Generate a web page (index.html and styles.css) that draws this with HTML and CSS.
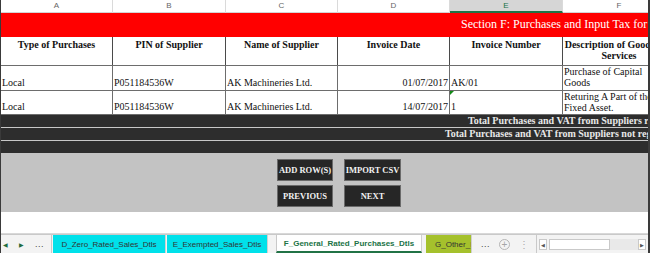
FILE: index.html
```html
<!DOCTYPE html>
<html lang="en">
<head>
    <meta charset="UTF-8">
    <title>Section F - Purchases</title>
    <link rel="stylesheet" href="styles.css">
</head>
<body>
    <div class="window">
        <div class="sheet">
            <div class="col-heads">
                <div class="col-head">A</div>
                <div class="col-head">B</div>
                <div class="col-head">C</div>
                <div class="col-head">D</div>
                <div class="col-head selected">E</div>
                <div class="col-head">F</div>
            </div>

            <div class="section-title">
                <span>Section F: Purchases and Input Tax for the period</span>
            </div>

            <div class="row head-row">
                <div class="cell">Type of Purchases</div>
                <div class="cell">PIN of Supplier</div>
                <div class="cell">Name of Supplier</div>
                <div class="cell">Invoice Date</div>
                <div class="cell">Invoice Number</div>
                <div class="cell">Description of Goods and Services</div>
            </div>

            <div class="row data-row">
                <div class="cell">Local</div>
                <div class="cell">P051184536W</div>
                <div class="cell">AK Machineries Ltd.</div>
                <div class="cell num">01/07/2017</div>
                <div class="cell">AK/01</div>
                <div class="cell wrap">Purchase of Capital Goods</div>
            </div>
            <div class="row data-row second">
                <div class="cell">Local</div>
                <div class="cell">P051184536W</div>
                <div class="cell">AK Machineries Ltd.</div>
                <div class="cell num">14/07/2017</div>
                <div class="cell flagged">1</div>
                <div class="cell wrap">Returing A Part of the Fixed Asset.</div>
            </div>

            <div class="total-row first"><span>Total Purchases and VAT from Suppliers registered</span></div>
            <div class="total-row second"><span>Total Purchases and VAT from Suppliers not registered</span></div>
            <div class="total-row empty"></div>

            <div class="actions">
                <div class="btn-grid">
                    <button class="sheet-btn">ADD ROW(S)</button>
                    <button class="sheet-btn">IMPORT CSV</button>
                    <button class="sheet-btn">PREVIOUS</button>
                    <button class="sheet-btn">NEXT</button>
                </div>
            </div>

            <div class="blank-row"></div>
        </div>

        <div class="tab-bar">
            <div class="tab-nav">
                <span class="arrow">&#9664;</span>
                <span class="arrow">&#9654;</span>
                <span class="dots">...</span>
            </div>
            <div class="tab cyan zero">D_Zero_Rated_Sales_Dtls</div>
            <div class="tab cyan exempt">E_Exempted_Sales_Dtls</div>
            <div class="tab active">F_General_Rated_Purchases_Dtls</div>
            <div class="tab olive"><span>G_Other_R</span></div>
            <span class="dots more">...</span>
            <span class="add-sheet">+</span>
            <span class="split">&#8942;</span>
            <div class="hscroll">
                <span class="sarrow">&#9664;</span>
                <span class="thumb"></span>
                <span class="track"></span>
                <span class="sarrow right">&#9654;</span>
            </div>
        </div>
    </div>
</body>
</html>
```

FILE: styles.css
```css
/* Base Reset */
* {
    margin: 0;
    padding: 0;
    box-sizing: border-box;
}

body {
    width: 650px;
    height: 253px;
    overflow: hidden;
    background: #fff;
    font-family: 'Liberation Serif', 'DejaVu Serif', serif;
}

/* Outer frame */
.window {
    width: 650px;
    height: 253px;
    border-left: 1px solid #3a3a3a;
    border-right: 2px solid #3a3a3a;
    overflow: hidden;
    display: flex;
    flex-direction: column;
}

.sheet {
    width: 675px;
    flex: 1;
}

/* Column letters */
.col-heads {
    display: grid;
    grid-template-columns: 112px 113px 112px 112px 113px 113px;
    height: 13px;
    background: #fff;
    border-bottom: 1px solid #d4d4d4;
}

.col-head {
    font-family: 'Liberation Sans', Arial, sans-serif;
    font-size: 8px;
    line-height: 12px;
    color: #666;
    text-align: center;
    border-right: 1px solid #dadada;
}

.col-head.selected {
    background: #d6d6d6;
    color: #217346;
    border-bottom: 2px solid #217346;
    line-height: 11px;
}

/* Red section band */
.section-title {
    height: 24px;
    background: #ff0000;
    color: #fff;
    font-family: 'Liberation Serif', serif;
    font-size: 12px;
    line-height: 23px;
    padding-left: 460px;
    white-space: nowrap;
    overflow: hidden;
}

/* Table rows */
.row {
    display: grid;
    grid-template-columns: 112px 113px 112px 112px 113px 113px;
}

.cell {
    border-right: 1px solid #6d6d6d;
    font-size: 10px;
    color: #111;
    white-space: nowrap;
    overflow: hidden;
}

.head-row {
    height: 29px;
    border-bottom: 1px solid #6d6d6d;
}

.head-row .cell {
    font-weight: bold;
    text-align: center;
    line-height: 11px;
    padding-top: 2px;
    border-right: 1px solid #4a4a4a;
}

.head-row .cell:last-child {
    white-space: normal;
    padding: 2px 0 0;
}

.data-row {
    height: 25px;
    border-bottom: 1px solid #6d6d6d;
}

.data-row.second {
    height: 24px;
}

.data-row .cell {
    display: flex;
    align-items: flex-end;
    padding: 0 1px 2px;
    line-height: 11px;
}

.data-row .cell.num {
    justify-content: flex-end;
}

.data-row .cell.wrap {
    white-space: normal;
    align-items: flex-start;
    padding: 0 20px 0 1px;
    line-height: 11px;
}

.cell.flagged {
    position: relative;
}

.cell.flagged::before {
    content: "";
    position: absolute;
    top: 0;
    left: 0;
    border-top: 4px solid #138a17;
    border-right: 4px solid transparent;
}

/* Dark total rows */
.total-row {
    height: 13px;
    background: #2d2d2d;
    border-bottom: 1px solid #c8c8c8;
    color: #e8e8e8;
    font-weight: bold;
    font-size: 10px;
    line-height: 12px;
    white-space: nowrap;
    overflow: hidden;
}

.total-row.first {
    padding-left: 467px;
}

.total-row.second {
    padding-left: 444px;
}

.total-row.empty {
    height: 12px;
    border-bottom: none;
}

/* Action buttons */
.actions {
    height: 59px;
    background: #c3c3c3;
    padding: 6px 0 0 276px;
}

.btn-grid {
    display: grid;
    grid-template-columns: 56px 57px;
    column-gap: 11px;
    row-gap: 4px;
}

.sheet-btn {
    height: 22px;
    background: #262626;
    border: 1px solid #6a6a6a;
    color: #f2f2f2;
    font-family: 'Liberation Serif', serif;
    font-weight: bold;
    font-size: 8.5px;
}

.blank-row {
    height: 22px;
    border-bottom: 1px solid #d8d8d8;
}

/* Sheet tabs */
.tab-bar {
    height: 19px;
    background: #f3f3f3;
    border-top: 1px solid #c9c9c9;
    display: flex;
    align-items: stretch;
    font-family: 'Liberation Sans', Arial, sans-serif;
    font-size: 8px;
    flex-shrink: 0;
}

.tab-nav {
    width: 51px;
    display: flex;
    align-items: center;
    gap: 11px;
    padding-left: 2px;
    color: #1f6b3d;
    font-size: 6px;
    border-right: 1px solid #c9c9c9;
}

.dots {
    color: #444;
    font-size: 9px;
    letter-spacing: 0.5px;
}

.tab {
    display: flex;
    align-items: center;
    justify-content: center;
    color: #333;
    white-space: nowrap;
    overflow: hidden;
    border-right: 1px solid #d0d0d0;
}

.tab.cyan {
    background: #00e1ea;
    margin-left: 1px;
}

.tab.zero {
    width: 113px;
}

.tab.exempt {
    width: 101px;
}

.tab.active {
    width: 146px;
    margin-left: 8px;
    background: #fff;
    color: #217346;
    font-weight: bold;
    border-bottom: 2px solid #217346;
    border-left: 1px solid #c9c9c9;
}

.tab.olive {
    width: 46px;
    margin-left: 4px;
    background: #a5c12c;
    justify-content: flex-start;
    padding-left: 9px;
}

.tab.olive span {
    display: block;
    width: 36px;
    overflow: hidden;
}

.dots.more {
    display: flex;
    align-items: center;
    margin-left: 9px;
}

.add-sheet {
    width: 11px;
    height: 11px;
    align-self: center;
    margin-left: 9px;
    border: 1px solid #b5b5b5;
    border-radius: 50%;
    color: #a5a5a5;
    font-size: 10px;
    line-height: 9px;
    text-align: center;
}

.split {
    align-self: center;
    margin-left: 9px;
    color: #aaa;
    font-size: 10px;
}

.hscroll {
    flex: 1;
    display: flex;
    align-items: center;
    margin-left: 7px;
    padding: 0 2px;
    border-left: 1px solid #c9c9c9;
}

.sarrow {
    font-size: 5px;
    color: #555;
    width: 8px;
    height: 11px;
    line-height: 11px;
    text-align: center;
    background: #fff;
    border: 1px solid #c9c9c9;
}

.thumb {
    width: 61px;
    height: 11px;
    background: #fff;
    border: 1px solid #c9c9c9;
    margin-left: 2px;
}

.track {
    flex: 1;
    height: 11px;
    background: #e9e9e9;
}
```
